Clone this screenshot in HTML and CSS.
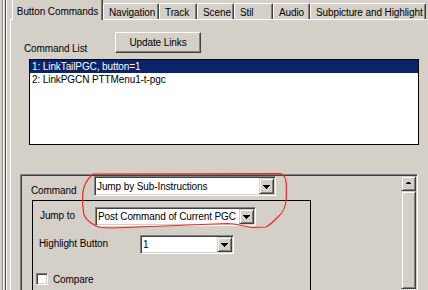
FILE: index.html
```html
<!DOCTYPE html>
<html>
<head>
<meta charset="utf-8">
<link rel="stylesheet" href="styles.css">
</head>
<body>
<div class="app">
  <div class="edge"></div>
  <div class="tabctl">
    <div class="tabs">
      <div class="tab tab-active w-btn">Button Commands</div>
      <div class="tab w-nav">Navigation</div>
      <div class="tab w-track">Track</div>
      <div class="tab w-scene">Scene</div>
      <div class="tab w-stil">Stil</div>
      <div class="tab w-audio">Audio</div>
      <div class="tab w-sub">Subpicture and Highlight</div>
    </div>
    <div class="panel">
      <div class="list-head">
        <div class="list-label">Command List</div>
        <div class="btn">Update Links</div>
      </div>
      <div class="listbox">
        <div class="list-row selected">1: LinkTailPGC, button=1</div>
        <div class="list-row">2: LinkPGCN PTTMenu1-t-pgc</div>
      </div>
      <div class="scrollpane">
        <div class="pane-content">
          <div class="field-row cmd-row">
            <div class="field-label lbl-cmd">Command</div>
            <div class="combo combo-cmd">
              <div class="combo-text">Jump by Sub-Instructions</div>
              <div class="combo-btn"><svg width="7" height="4" viewBox="0 0 7 4"><rect x="0" y="0" width="7" height="1"/><rect x="1" y="1" width="5" height="1"/><rect x="2" y="2" width="3" height="1"/><rect x="3" y="3" width="1" height="1"/></svg></div>
            </div>
          </div>
          <div class="group">
            <div class="field-row jump-row">
              <div class="field-label lbl-jump">Jump to</div>
              <div class="combo combo-jump">
                <div class="combo-text">Post Command of Current PGC</div>
                <div class="combo-btn"><svg width="7" height="4" viewBox="0 0 7 4"><rect x="0" y="0" width="7" height="1"/><rect x="1" y="1" width="5" height="1"/><rect x="2" y="2" width="3" height="1"/><rect x="3" y="3" width="1" height="1"/></svg></div>
              </div>
            </div>
            <div class="field-row hl-row">
              <div class="field-label lbl-hl">Highlight Button</div>
              <div class="combo combo-hl">
                <div class="combo-text">1</div>
                <div class="combo-btn"><svg width="7" height="4" viewBox="0 0 7 4"><rect x="0" y="0" width="7" height="1"/><rect x="1" y="1" width="5" height="1"/><rect x="2" y="2" width="3" height="1"/><rect x="3" y="3" width="1" height="1"/></svg></div>
              </div>
            </div>
            <div class="check-row">
              <div class="checkbox"></div>
              <div class="check-label">Compare</div>
            </div>
          </div>
        </div>
        <div class="vscroll">
          <div class="sb-btn"><svg width="5" height="2" viewBox="0 0 5 2"><rect x="1" y="0" width="3" height="1"/><rect x="0" y="1" width="5" height="1"/></svg></div>
          <div class="sb-track"><div class="sb-thumb"></div></div>
        </div>
      </div>
    </div>
  </div>
  <svg class="annotation" width="428" height="290" viewBox="0 0 428 290">
    <path d="M93,174 L281,173.5 C284,175 286,178 286.3,184 L286.3,198 C286,205 283,213 278,217 C274,221 270,225 266,227 L252,227.5 L234,224 L227,223.5 L113,228 L100,227.5 C93,225 87,221 84,215 L82.7,206 L82.7,195 C83,187 86,180 93,174 Z" fill="none" stroke="#f02424" stroke-width="1.2"/>
  </svg>
</div>
</body>
</html>
```
FILE: styles.css
```css
* { box-sizing: border-box; }

body {
  margin: 0;
  background: #d4d0c8;
  font-family: "Liberation Sans", Arial, sans-serif;
  font-size: 10px;
  letter-spacing: -0.1px;
  color: #000;
}

.app {
  position: relative;
  display: flex;
  width: 428px;
  height: 290px;
  overflow: hidden;
}

.edge {
  width: 10px;
  flex: none;
  background: linear-gradient(to right,
    transparent 0 2px, #8c8c8c 2px 3px, #ffffff 3px 4px,
    transparent 4px 5px, #505050 5px 6px, #ffffff 6px 7px, transparent 7px);
}

.tabctl {
  flex: 1;
  min-width: 0;
  display: flex;
  flex-direction: column;
}

.tabs {
  height: 19px;
  flex: none;
  display: flex;
  align-items: flex-end;
  padding-left: 2px;
}

.tab {
  flex: none;
  height: 16px;
  padding: 2px 0 0 5px;
  line-height: 13px;
  white-space: nowrap;
  overflow: hidden;
  border-top: 1px solid #fff;
  border-left: 1px solid #fff;
  border-right: 1px solid #404040;
  box-shadow: inset -1px 0 #808080;
  border-radius: 2px 2px 0 0;
  background: #d4d0c8;
}

.tab-active {
  height: 21px;
  margin-bottom: -1px;
  padding: 5px 0 0 0;
  text-align: center;
  z-index: 1;
}

.w-btn { width: 91px; }
.w-nav { width: 56px; }
.w-track { width: 38px; }
.w-scene { width: 37px; }
.w-stil { width: 39px; }
.w-audio { width: 37px; }
.w-sub { width: 116px; }

.panel {
  flex: 1;
  border-top: 1px solid #fff;
  border-left: 1px solid #fff;
}

.list-head {
  display: flex;
  align-items: flex-start;
  margin: 12px 0 0 13px;
}

.list-label {
  width: 91px;
  margin-top: 11px;
  line-height: 12px;
  white-space: nowrap;
}

.btn {
  width: 86px;
  height: 21px;
  padding-top: 1px;
  line-height: 18px;
  text-align: center;
  border: 1px solid;
  border-color: #fff #404040 #404040 #fff;
  box-shadow: inset -1px -1px #808080;
}

.listbox {
  margin: 4px 0 0 18px;
  width: 390px;
  height: 86px;
  border: 1px solid #000;
  background: #fff;
}

.list-row {
  height: 13px;
  line-height: 13px;
  padding-left: 2px;
  white-space: nowrap;
}

.list-row.selected {
  background: #0a246a;
  color: #fff;
}

.scrollpane {
  margin: 29px 0 0 9px;
  width: 398px;
  height: 130px;
  display: flex;
  padding: 1px 1px 0 1px;
  border: 1px solid;
  border-color: #808080 #fff #fff #808080;
  box-shadow: inset 1px 1px #404040, inset -1px -1px #d4d0c8;
}

.pane-content {
  flex: 1;
  min-width: 0;
}

.field-row {
  display: flex;
  align-items: flex-start;
}

.field-label {
  flex: none;
  line-height: 12px;
  white-space: nowrap;
}

.cmd-row { padding-left: 9px; }
.lbl-cmd { width: 63px; margin-top: 9px; }

.combo {
  flex: none;
  display: flex;
  padding: 1px;
  background: #fff;
  border: 1px solid;
  border-color: #808080 #fff #fff #808080;
  box-shadow: inset 1px 1px #404040, inset -1px -1px #d4d0c8;
}

.combo-text {
  flex: 1;
  min-width: 0;
  padding: 1px 0 0 1px;
  line-height: 14px;
  white-space: nowrap;
  overflow: hidden;
}

.combo-cmd { width: 182px; height: 20px; }
.combo-cmd .combo-text { line-height: 15px; }
.combo-jump { width: 161px; height: 19px; }
.combo-hl { width: 94px; height: 19px; }

.combo-btn {
  width: 15px;
  flex: none;
  display: flex;
  align-items: center;
  justify-content: center;
  padding-top: 1px;
  background: #d4d0c8;
  border: 1px solid;
  border-color: #d4d0c8 #404040 #404040 #d4d0c8;
  box-shadow: inset 1px 1px #fff, inset -1px -1px #808080;
}

.combo-btn svg, .sb-btn svg { display: block; fill: #000; }

.group {
  margin: 3px 0 0 10px;
  width: 279px;
  height: 91px;
  border: 1px solid #000;
}

.jump-row { margin-top: 6px; padding-left: 7px; }
.lbl-jump { width: 55px; margin-top: 3px; }

.hl-row { margin-top: 9px; padding-left: 6px; }
.lbl-hl { width: 101px; margin-top: 3px; }

.check-row {
  display: flex;
  align-items: flex-start;
  margin-top: 19px;
  padding-left: 3px;
}

.checkbox {
  width: 12px;
  height: 12px;
  flex: none;
  background: #fff;
  border: 1px solid;
  border-color: #808080 #fff #fff #808080;
  box-shadow: inset 1px 1px #404040, inset -1px -1px #d4d0c8;
}

.check-label {
  margin: 1px 0 0 5px;
  line-height: 12px;
}

.vscroll {
  width: 15px;
  flex: none;
  display: flex;
  flex-direction: column;
}

.sb-btn, .sb-thumb {
  background: #d4d0c8;
  border: 1px solid;
  border-color: #d4d0c8 #404040 #404040 #d4d0c8;
  box-shadow: inset 1px 1px #fff, inset -1px -1px #808080;
}

.sb-btn {
  height: 15px;
  flex: none;
  display: flex;
  align-items: center;
  justify-content: center;
  padding-bottom: 1px;
}

.sb-track {
  flex: 1;
  background: conic-gradient(#fff 0 25%, #d4d0c8 0 50%, #fff 0 75%, #d4d0c8 0);
  background-size: 2px 2px;
}

.sb-thumb { height: 98px; }

.annotation {
  position: absolute;
  left: 0;
  top: 0;
  pointer-events: none;
}
```
